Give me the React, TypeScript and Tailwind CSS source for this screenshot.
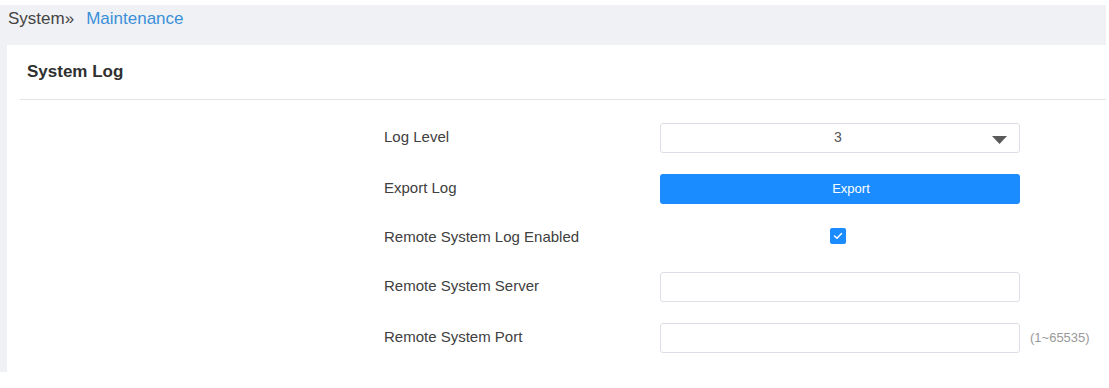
import React from "react";

const font = { fontFamily: '"Liberation Sans", Arial, sans-serif' };

function Row({ label, h, children }: { label: string; h: string; children: React.ReactNode }) {
  return (
    <div className={`flex items-center ${h}`}>
      <div className="w-[276px] shrink-0 text-[15px] text-[#404040]">{label}</div>
      <div className="flex items-center">{children}</div>
    </div>
  );
}

export default function App() {
  return (
    <div className="w-[1109px] h-[388px] bg-white overflow-hidden" style={font}>
      <div className="mt-[5px] w-[1106px] bg-[#f0f1f4]">
        <div className="h-[40px] pt-[4px] pl-[8px] flex items-start text-[17px] leading-[20px]">
          <span className="text-[#444]">System</span>
          <span className="text-[#444]">»</span>
          <span className="ml-[12px] text-[#3a8fd9]">Maintenance</span>
        </div>
        <div className="ml-[7px] h-[327px] bg-white">
          <div className="ml-[13px] h-[55px] border-b border-[#e3e3e3] flex items-center pl-[7px] pb-[1px]">
            <span className="text-[17px] font-bold text-[#2f2f2f]">System Log</span>
          </div>
          <div className="pt-[12px] pl-[377px]">
            <Row label="Log Level" h="h-[51px]">
              <div className="relative w-[360px] h-[30px] rounded-[3px] border border-[#dcdfe6] bg-white flex items-center justify-center pr-[4px] text-[14px] text-[#555]">
                3
                <svg className="absolute right-[12px] top-[12px]" width="15" height="8" viewBox="0 0 15 8">
                  <path d="M0 0 L15 0 L7.5 8 Z" fill="#5a5a5a" />
                </svg>
              </div>
            </Row>
            <Row label="Export Log" h="h-[51px]">
              <button className="w-[360px] h-[30px] rounded-[3px] bg-[#1a8cff] text-white text-[13px] flex items-center justify-center pl-[22px]">
                Export
              </button>
            </Row>
            <Row label="Remote System Log Enabled" h="h-[47px]">
              <div className="w-[360px] h-[30px] flex items-start pl-[170px] pt-[5px]">
                <div className="w-[16px] h-[16px] rounded-[2px] bg-[#1a8cff] flex items-center justify-center">
                  <svg width="10" height="8" viewBox="0 0 10 8">
                    <path d="M1.5 4 L4 6.3 L8.5 1.5" stroke="white" strokeWidth="1.5" fill="none" strokeLinecap="round" strokeLinejoin="round" />
                  </svg>
                </div>
              </div>
            </Row>
            <Row label="Remote System Server" h="h-[51px]">
              <div className="w-[360px] h-[30px] rounded-[3px] border border-[#dcdfe6] bg-white" />
            </Row>
            <Row label="Remote System Port" h="h-[51px]">
              <div className="w-[360px] h-[30px] rounded-[3px] border border-[#dcdfe6] bg-white" />
              <span className="ml-[10px] text-[13px] text-[#999]">(1~65535)</span>
            </Row>
          </div>
        </div>
      </div>
    </div>
  );
}
